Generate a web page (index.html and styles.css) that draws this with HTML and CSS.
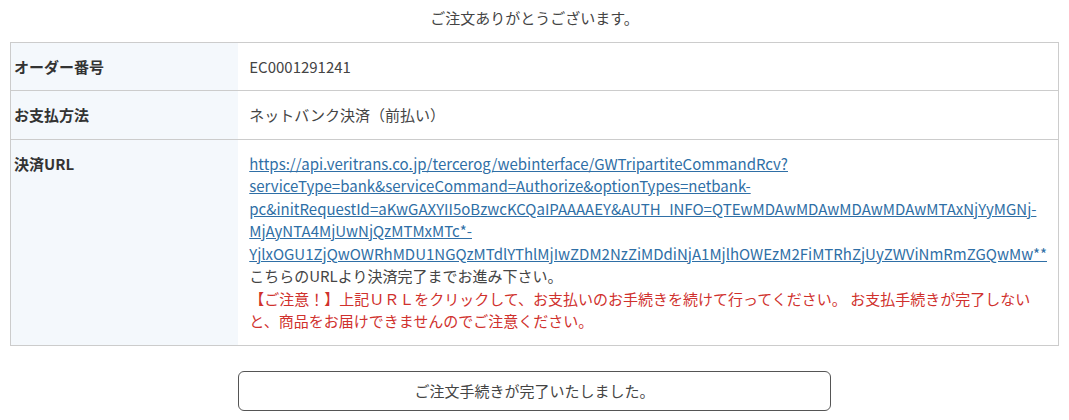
FILE: index.html
```html
<!DOCTYPE html>
<html lang="ja">
<head>
  <meta charset="UTF-8">
  <meta name="viewport" content="width=device-width, initial-scale=1.0">
  <title>ご注文完了</title>
  <link rel="stylesheet" href="styles.css">
</head>
<body>
  <div class="thanks">ご注文ありがとうございます。</div>
  <table class="order">
    <tr>
      <th>オーダー番号</th>
      <td>EC0001291241</td>
    </tr>
    <tr>
      <th>お支払方法</th>
      <td>ネットバンク決済（前払い）</td>
    </tr>
    <tr>
      <th>決済URL</th>
      <td>
        <a href="#" class="pay-link">https://api.veritrans.co.jp/tercerog/webinterface/GWTripartiteCommandRcv?<wbr>serviceType=bank&amp;serviceCommand=Authorize&amp;optionTypes=netbank-<wbr>pc&amp;initRequestId=aKwGAXYII5oBzwcKCQaIPAAAAEY&amp;AUTH_INFO=QTEwMDAwMDAwMDAwMDAwMTAxNjYyMGNj-<wbr>MjAyNTA4MjUwNjQzMTMxMTc*-<wbr>YjlxOGU1ZjQwOWRhMDU1NGQzMTdlYThlMjIwZDM2NzZiMDdiNjA1MjlhOWEzM2FiMTRhZjUyZWViNmRmZGQwMw**</a><br>
        こちらのURLより決済完了までお進み下さい。<br>
        <span class="caution">【ご注意！】上記ＵＲＬをクリックして、お支払いのお手続きを続けて行ってください。 お支払手続きが完了しないと、商品をお届けできませんのでご注意ください。</span>
      </td>
    </tr>
  </table>
  <div class="actions">
    <button class="done">ご注文手続きが完了いたしました。</button>
  </div>
</body>
</html>
```

FILE: styles.css
```css
* {
  margin: 0;
  padding: 0;
  box-sizing: border-box;
}

body {
  font-family: "Noto Sans CJK JP", "Noto Sans", sans-serif;
  font-size: 15px;
  line-height: 1.5;
  color: #444;
  background: #fff;
  padding: 0 10px;
}

.thanks {
  text-align: center;
  padding: 7px 0 12px;
}

.order {
  width: 100%;
  border-collapse: collapse;
  border: 1px solid #ccc;
}

.order th,
.order td {
  border-top: 1px solid #ccc;
  padding: 13px 11px 12px;
  text-align: left;
  vertical-align: top;
}

.order th {
  width: 230px;
  padding-left: 3px;
  background: #f4f8fc;
  font-weight: bold;
  color: #333;
}

.pay-link {
  color: #2f6fa6;
  text-decoration: underline;
}

.caution {
  color: #d0312d;
}

.actions {
  display: flex;
  justify-content: center;
  padding-top: 25px;
}

.done {
  width: 593px;
  height: 40px;
  font-family: inherit;
  font-size: 15px;
  color: #444;
  background: #fff;
  border: 1px solid #555;
  border-radius: 6px;
}
```
